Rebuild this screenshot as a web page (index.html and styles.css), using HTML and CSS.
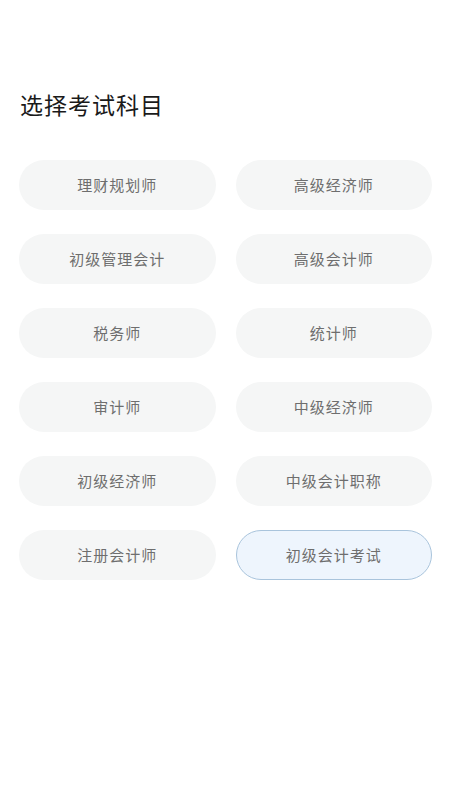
FILE: index.html
```html
<!DOCTYPE html>
<html>
	<head>
		<title>选择考试科目</title>
		<meta http-equiv="Content-Type" content="text/html; charset=utf-8" />
		<meta name="viewport" content="initial-scale=1.0, width=device-width, user-scalable=no" />
		<link rel="stylesheet" href="styles.css">
	</head>
	<body>
		<div id="page">
			<h1 class="pageTitle">选择考试科目</h1>
			<div class="subjectGrid">
				<div class="subject">理财规划师</div>
				<div class="subject">高级经济师</div>
				<div class="subject">初级管理会计</div>
				<div class="subject">高级会计师</div>
				<div class="subject">税务师</div>
				<div class="subject">统计师</div>
				<div class="subject">审计师</div>
				<div class="subject">中级经济师</div>
				<div class="subject">初级经济师</div>
				<div class="subject">中级会计职称</div>
				<div class="subject">注册会计师</div>
				<div class="subject selected">初级会计考试</div>
			</div>
		</div>
	</body>
</html>
```

FILE: styles.css
```css
body {
	margin: 0px;
	padding: 0px;
	background: #FFFFFF;
	font-family: "Noto Sans CJK SC", "Noto Sans", sans-serif;
	overflow: hidden;
}
#page {
	padding: 88px 18px 0px 19px;
}
.pageTitle {
	margin: 0px 0px 40px 1px;
	font-size: 23px;
	line-height: 32px;
	letter-spacing: 1px;
	font-weight: 400;
	color: #1A1A1A;
}
.subjectGrid {
	display: grid;
	grid-template-columns: 1fr 1fr;
	column-gap: 20px;
	row-gap: 24px;
}
.subject {
	height: 50px;
	box-sizing: border-box;
	padding-bottom: 2px;
	border-radius: 25px;
	background-color: #F5F6F6;
	color: #6E6E6E;
	font-size: 15px;
	letter-spacing: 1px;
	display: flex;
	align-items: center;
	justify-content: center;
}
.subject.selected {
	background-color: #EEF5FD;
	border: 1px solid #A9C4DC;
}
```
